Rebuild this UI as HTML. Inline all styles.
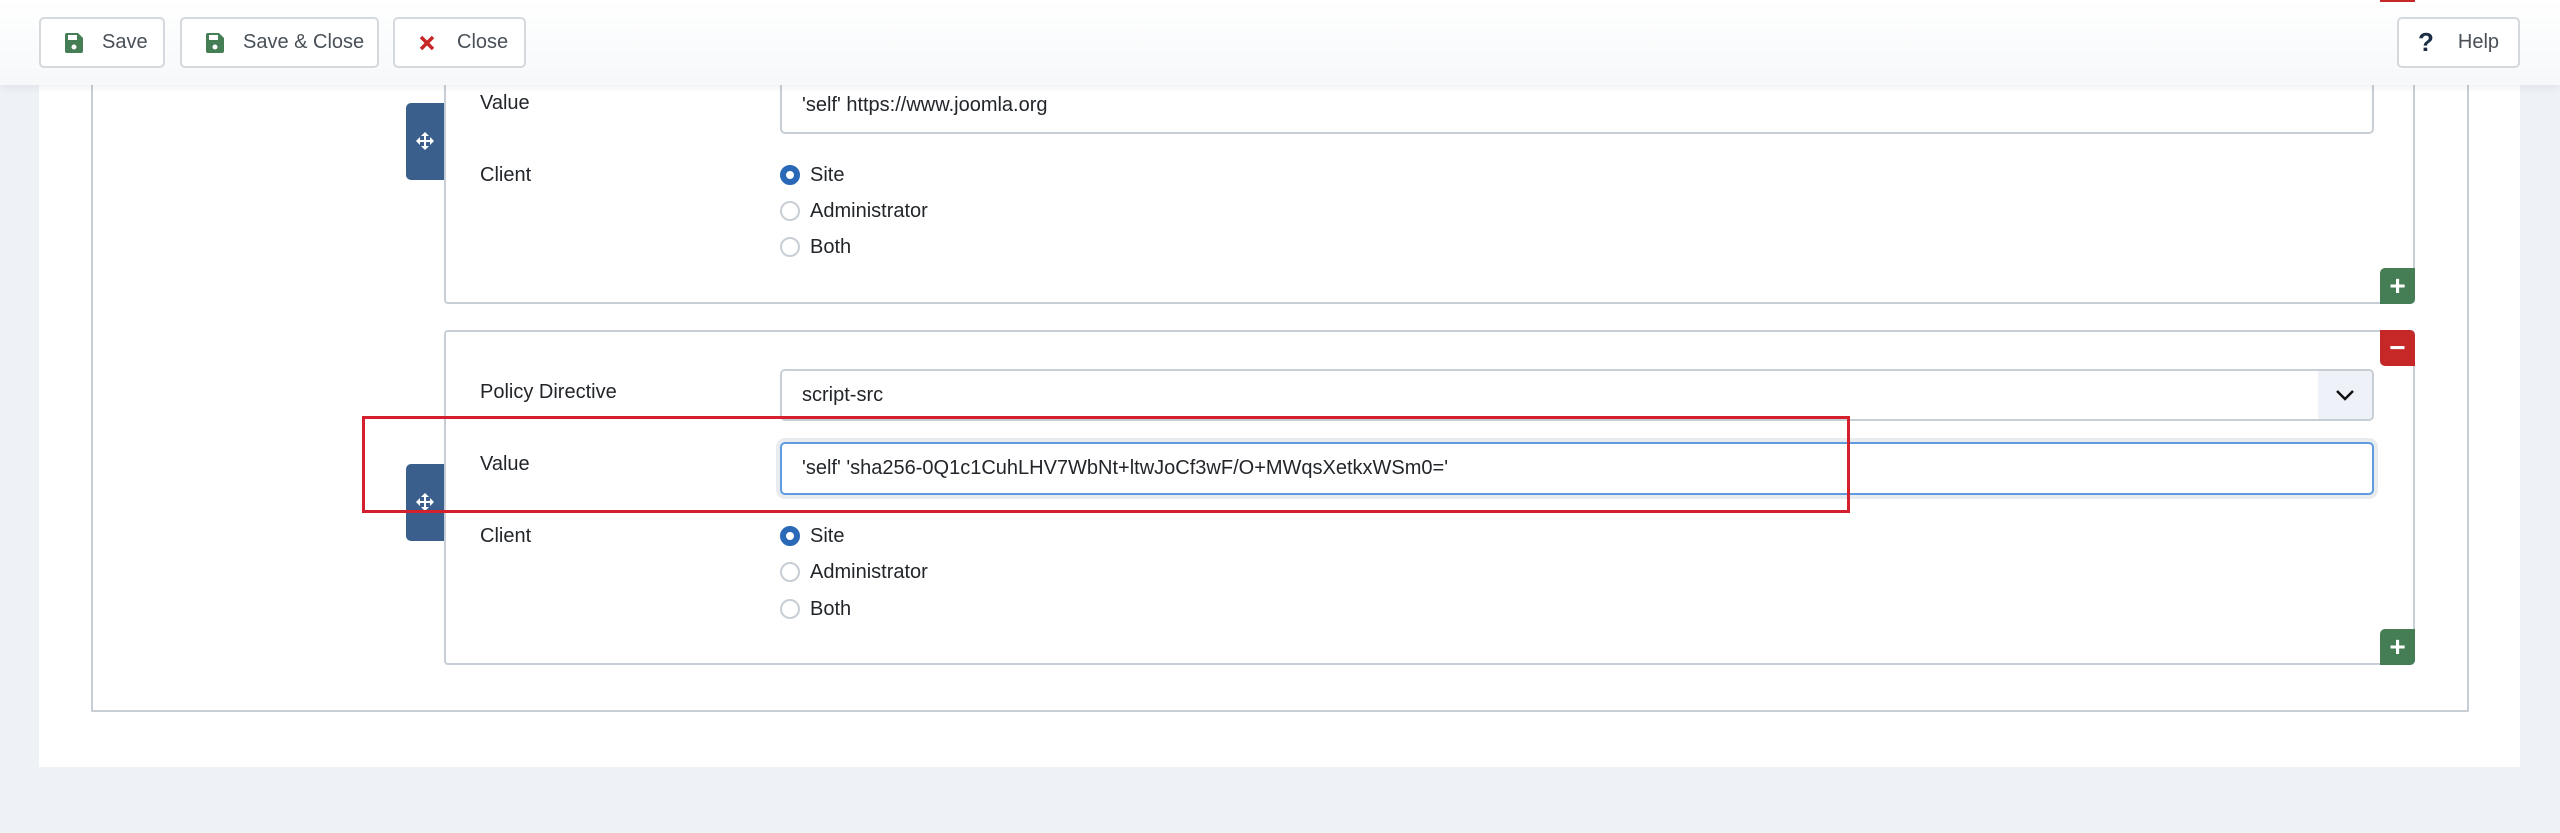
<!DOCTYPE html>
<html><head><meta charset="utf-8"><style>
*{box-sizing:border-box;margin:0;padding:0}
body{width:2560px;height:833px;background:#eef2f6;position:relative;overflow:hidden;font-family:"Liberation Sans",Arial,sans-serif;color:#22262a;font-size:20px}
.a{position:absolute}
.card{left:39px;top:0;width:2481px;height:767px;background:#fff}
.fs{left:91px;top:0;width:2378px;height:712px;border:2px solid #c8ced6;border-top:none}
.box{border:2px solid #c8ced6;border-radius:4px;background:#fff}
.handle{background:#3b5f8c;border-radius:5px 0 0 5px;width:38px;height:77px}
.lbl{font-size:20px;color:#22262a}
.inp{border:2px solid #c8ced6;border-radius:5px;background:#fff;padding-left:20px;display:flex;align-items:center;font-size:20px}
.rad{width:20px;height:20px;border-radius:50%;border:2px solid #c8ced6;background:#fff}
.rad.on{border:6px solid #2a69b8}
.sq{width:35px;height:36px;color:#fff;display:flex;align-items:center;justify-content:center;font-weight:bold;font-size:28px}
.tb{left:0;top:0;width:2560px;height:85px;background:linear-gradient(#fff,#f6f8fa);box-shadow:0 3px 8px rgba(0,0,0,.06)}
.btn{top:17px;height:51px;border:2px solid #d5d9de;border-radius:5px;background:#fff;display:flex;align-items:center;font-size:20px;color:#495057}
</style></head><body>
<div class="a card"></div>
<div class="a fs"></div>

<div class="a box" style="left:444px;top:-10px;width:1971px;height:314px"></div>
<div class="a handle" style="left:406px;top:103px"></div>
<svg class="a" style="left:415px;top:131px" width="20" height="20" viewBox="0 0 20 20" fill="#fff"><path d="M10 1l4 4h-3v4h4V6l4 4-4 4v-3h-4v4h3l-4 4-4-4h3v-4H5v3l-4-4 4-4v3h4V5H6z"/></svg>
<div class="a lbl" style="left:480px;top:92px">Value</div>
<div class="a inp" style="left:780px;top:77px;width:1594px;height:57px">'self' https://www.joomla.org</div>
<div class="a lbl" style="left:480px;top:164px">Client</div>
<div class="a rad on" style="left:780px;top:165px"></div><div class="a lbl" style="left:810px;top:164px">Site</div>
<div class="a rad" style="left:780px;top:201px"></div><div class="a lbl" style="left:810px;top:200px">Administrator</div>
<div class="a rad" style="left:780px;top:237px"></div><div class="a lbl" style="left:810px;top:236px">Both</div>
<div class="a sq" style="left:2380px;top:268px;background:#457d54;border-radius:5px 0 5px 0">+</div>

<div class="a box" style="left:444px;top:330px;width:1971px;height:335px"></div>
<div class="a sq" style="left:2380px;top:330px;background:#c52827;border-radius:0 5px 0 5px">−</div>
<div class="a lbl" style="left:480px;top:381px">Policy Directive</div>
<div class="a inp" style="left:780px;top:369px;width:1594px;height:52px">script-src</div>
<div class="a" style="left:2318px;top:371px;width:54px;height:48px;background:#eef2f8;border-radius:0 4px 4px 0"></div>
<svg class="a" style="left:2335px;top:389px" width="20" height="12" viewBox="0 0 20 12"><path d="M2 2l8 8 8-8" stroke="#111" stroke-width="2.5" fill="none"/></svg>
<div class="a lbl" style="left:480px;top:453px">Value</div>
<div class="a inp" style="left:780px;top:442px;width:1594px;height:53px;border-color:#5e9be0;box-shadow:0 0 0 4px #e9ecef">'self' 'sha256-0Q1c1CuhLHV7WbNt+ltwJoCf3wF/O+MWqsXetkxWSm0='</div>
<div class="a handle" style="left:406px;top:464px"></div>
<svg class="a" style="left:415px;top:492px" width="20" height="20" viewBox="0 0 20 20" fill="#fff"><path d="M10 1l4 4h-3v4h4V6l4 4-4 4v-3h-4v4h3l-4 4-4-4h3v-4H5v3l-4-4 4-4v3h4V5H6z"/></svg>
<div class="a lbl" style="left:480px;top:525px">Client</div>
<div class="a rad on" style="left:780px;top:526px"></div><div class="a lbl" style="left:810px;top:525px">Site</div>
<div class="a rad" style="left:780px;top:562px"></div><div class="a lbl" style="left:810px;top:561px">Administrator</div>
<div class="a rad" style="left:780px;top:599px"></div><div class="a lbl" style="left:810px;top:598px">Both</div>
<div class="a sq" style="left:2380px;top:629px;background:#457d54;border-radius:5px 0 5px 0">+</div>

<div class="a" style="left:362px;top:416px;width:1488px;height:97px;border:3px solid #d4202c"></div>

<div class="a tb"></div>
<div class="a" style="left:2380px;top:0;width:35px;height:2px;background:#c52827"></div>
<div class="a btn" style="left:39px;width:126px"><svg style="margin-left:24px" width="18" height="20" viewBox="0 0 18 20"><path d="M0 2a2 2 0 012-2h11l5 5v13a2 2 0 01-2 2H2a2 2 0 01-2-2z" fill="#457d54"/><rect x="3" y="2" width="9" height="5" fill="#fff"/><circle cx="9" cy="14" r="2.5" fill="#fff"/></svg><span style="margin-left:19px">Save</span></div>
<div class="a btn" style="left:180px;width:199px"><svg style="margin-left:24px" width="18" height="20" viewBox="0 0 18 20"><path d="M0 2a2 2 0 012-2h11l5 5v13a2 2 0 01-2 2H2a2 2 0 01-2-2z" fill="#457d54"/><rect x="3" y="2" width="9" height="5" fill="#fff"/><circle cx="9" cy="14" r="2.5" fill="#fff"/></svg><span style="margin-left:19px">Save &amp; Close</span></div>
<div class="a btn" style="left:393px;width:133px"><svg style="margin-left:24px" width="16" height="16" viewBox="0 0 16 16"><path d="M2 2l12 12M14 2L2 14" stroke="#c52827" stroke-width="3.5"/></svg><span style="margin-left:22px">Close</span></div>
<div class="a btn" style="left:2397px;width:123px;justify-content:center;gap:24px"><b style="color:#1c2e44;font-size:26px">?</b><span>Help</span></div>
</body></html>
